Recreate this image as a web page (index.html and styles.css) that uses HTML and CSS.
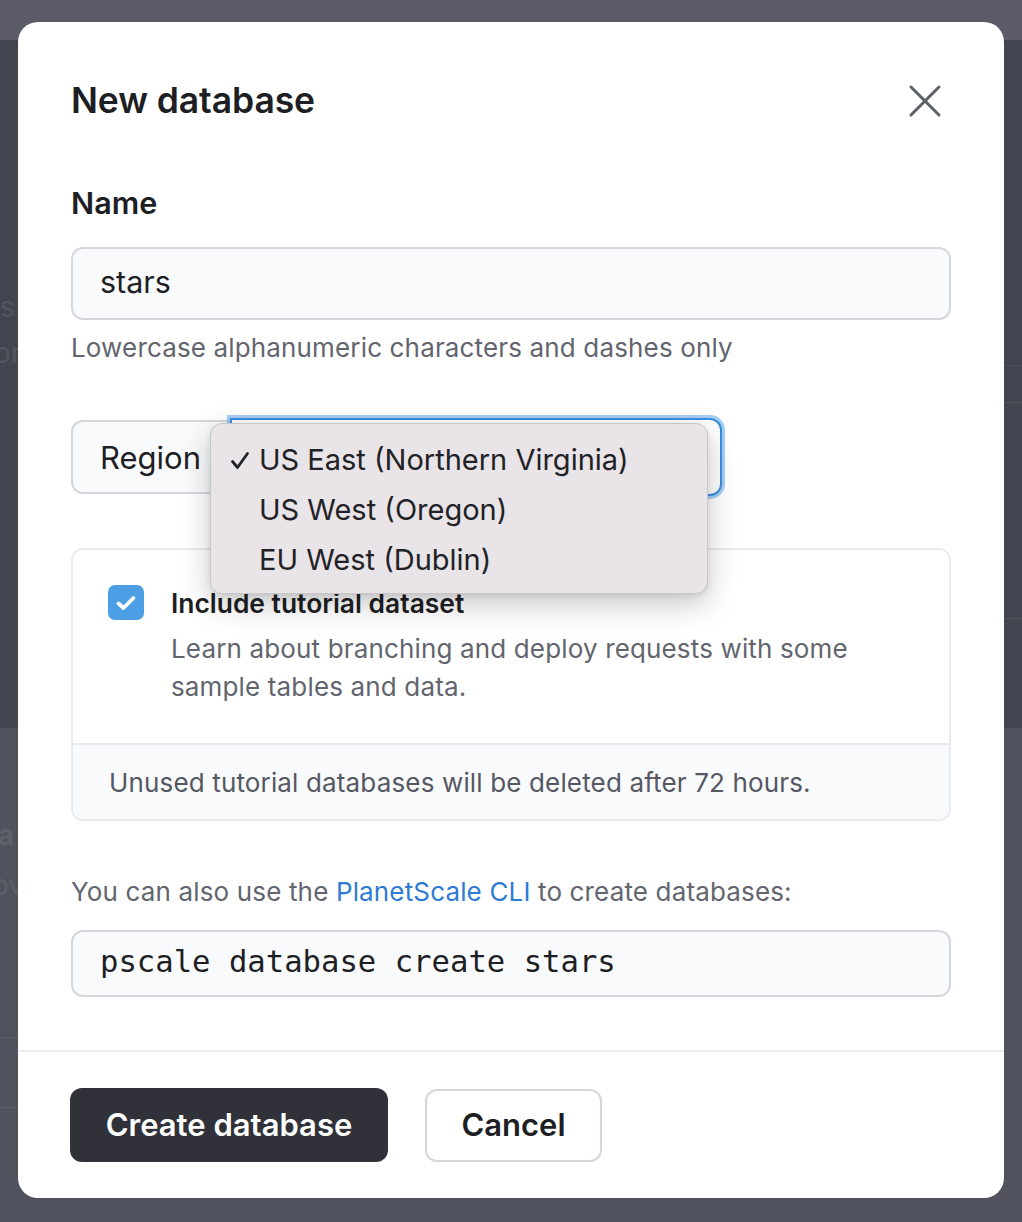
FILE: index.html
```html
<!DOCTYPE html>
<html>
<head>
<meta charset="utf-8">
<link rel="stylesheet" href="styles.css">
</head>
<body>
<div class="page">
  <div class="page-top"></div>
  <div class="page-main">
    <div class="bg-text bg-t1">s</div>
    <div class="bg-text bg-t2">or</div>
    <div class="bg-line bg-l1"></div>
    <div class="bg-line bg-l2"></div>
    <div class="bg-line bg-l3"></div>
  </div>
  <div class="page-bottom">
    <div class="bg-text bg-t3">a</div>
    <div class="bg-text bg-t4">ov</div>
    <div class="bg-line bg-l4"></div>
    <div class="bg-line bg-l5"></div>
  </div>
</div>

<div class="modal">
  <div class="modal-body">
    <div class="modal-header">
      <h2 class="title">New database</h2>
      <svg class="close" width="34" height="34" viewBox="0 0 34 34"><path d="M3 3 L31 31 M31 3 L3 31" stroke="#5d6068" stroke-width="3" stroke-linecap="round" fill="none"/></svg>
    </div>

    <label class="label">Name</label>
    <div class="input">stars</div>
    <p class="help">Lowercase alphanumeric characters and dashes only</p>

    <div class="region-group">
      <div class="region-label">Region</div>
      <div class="region-select"></div>
    </div>

    <div class="card">
      <div class="card-main">
        <div class="checkbox">
          <svg width="24" height="24" viewBox="0 0 24 24"><path d="M4.5 12.5 L9.5 17 L19.5 7" stroke="#fff" stroke-width="3.8" stroke-linecap="round" stroke-linejoin="round" fill="none"/></svg>
        </div>
        <div class="card-text">
          <div class="card-title">Include tutorial dataset</div>
          <div class="card-desc">Learn about branching and deploy requests with some sample tables and data.</div>
        </div>
      </div>
      <div class="card-foot">Unused tutorial databases will be deleted after 72 hours.</div>
    </div>

    <p class="cli">You can also use the <a class="link">PlanetScale CLI</a> to create databases:</p>
    <div class="code">pscale database create stars</div>
  </div>

  <div class="modal-footer">
    <button class="btn btn-primary">Create database</button>
    <button class="btn btn-secondary">Cancel</button>
  </div>

  <div class="popup">
    <div class="popup-item"><span class="tick"><svg width="20" height="20" viewBox="0 0 20 20"><path d="M2.5 10.5 L7.5 16.5 L17.5 2.5" stroke="#222226" stroke-width="2.8" stroke-linecap="round" stroke-linejoin="round" fill="none"/></svg></span>US East (Northern Virginia)</div>
    <div class="popup-item"><span class="tick"></span>US West (Oregon)</div>
    <div class="popup-item"><span class="tick"></span>EU West (Dublin)</div>
  </div>
</div>
</body>
</html>
```

FILE: styles.css
```css
* { box-sizing: border-box; }
html, body { margin: 0; padding: 0; }
body {
  width: 1022px;
  height: 1222px;
  overflow: hidden;
  position: relative;
  font-family: Inter, "Noto Sans", sans-serif;
  color: #1e1f24;
}

.page { display: flex; flex-direction: column; height: 1222px; }
.page-top { height: 40px; background: #5b5c68; }
.page-main { height: 688px; background: #42444f; position: relative; }
.page-bottom { flex: 1; background: #50525d; position: relative; }
.bg-text { position: absolute; color: #54565f; font-size: 28px; font-weight: 400; }
.bg-t1 { left: 0; top: 250px; }
.bg-t2 { left: -6px; top: 296px; }
.bg-t3 { left: -2px; top: 90px; font-weight: 700; color: #5f616a; }
.bg-t4 { left: -8px; top: 140px; color: #5c5e67; }
.bg-line { position: absolute; height: 1px; background: #4d5055; }
.bg-l1 { left: 1004px; right: 0; top: 325px; }
.bg-l2 { left: 1004px; right: 0; top: 362px; background: #4f5754; }
.bg-l3 { left: 1004px; right: 0; top: 578px; background: #4f5754; }
.bg-l4 { left: 0; width: 18px; top: 309px; background: #5a5c66; }
.bg-l5 { left: 0; width: 18px; top: 379px; background: #5a5c66; }

.modal {
  position: absolute;
  left: 18px;
  top: 22px;
  width: 986px;
  height: 1176px;
  background: #fff;
  border-radius: 20px;
  display: flex;
  flex-direction: column;
}
.modal-body {
  padding: 56px 53px 0 53px;
  flex: 1;
}
.modal-header {
  display: flex;
  align-items: center;
  justify-content: space-between;
  height: 46px;
}
.title {
  margin: 0;
  font-size: 35.5px;
  font-weight: 600;
  line-height: 46px;
  letter-spacing: -0.1px;
}
.close { margin-right: 9px; }

.label {
  display: block;
  margin-top: 61px;
  font-size: 30.5px;
  font-weight: 600;
  line-height: 36px;
}
.input {
  margin-top: 26px;
  height: 73px;
  border: 2px solid #d6d7dc;
  border-radius: 12px;
  background: #f9fafb;
  padding: 0 27px 4px;
  display: flex;
  align-items: center;
  font-size: 30.5px;
  color: #1e1f24;
}
.help {
  margin: 10px 0 0;
  font-size: 26px;
  line-height: 36px;
  color: #62656e;
  letter-spacing: 0.15px;
}

.region-group {
  margin-top: 54px;
  display: flex;
  height: 74px;
  width: 651px;
}
.region-label {
  width: 159px;
  border: 2px solid #d6d7dc;
  border-right: none;
  border-radius: 12px 0 0 12px;
  background: #f9fafb;
  display: flex;
  align-items: center;
  padding-left: 27px;
  font-size: 31px;
}
.region-select {
  flex: 1;
  margin: -2px 0 -2px 0;
  border: 2px solid #3a8fe0;
  border-radius: 0 12px 12px 0;
  box-shadow: 0 0 0 3px rgba(92, 168, 236, 0.55);
  background: #fff;
}

.card {
  margin-top: 54px;
  border: 2px solid #ebebef;
  border-radius: 12px;
  overflow: hidden;
}
.card-main {
  display: flex;
  padding: 35px 36px 37px 35px;
  gap: 27px;
}
.checkbox {
  width: 36px;
  height: 35px;
  border-radius: 7px;
  background: #4c9fe4;
  display: flex;
  align-items: center;
  justify-content: center;
  flex: none;
}
.card-text { flex: 1; }
.card-title {
  font-size: 26.4px;
  font-weight: 600;
  line-height: 36px;
  margin-top: 0;
}
.card-desc {
  margin-top: 9px;
  font-size: 26px;
  line-height: 38px;
  color: #62656e;
  letter-spacing: 0.15px;
  width: 720px;
}
.card-foot {
  border-top: 2px solid #ebebef;
  background: #f9fafb;
  height: 76px;
  display: flex;
  align-items: center;
  padding-left: 36px;
  font-size: 26px;
  color: #555862;
  letter-spacing: 0.15px;
}

.cli {
  margin: 53px 0 0;
  font-size: 26px;
  line-height: 36px;
  color: #62656e;
  letter-spacing: 0.15px;
}
.link { color: #2d7bd4; }
.code {
  margin-top: 20px;
  height: 67px;
  border: 2px solid #d6d7dc;
  border-radius: 12px;
  background: #f9fafb;
  display: flex;
  align-items: center;
  padding: 0 0 4px 27px;
  font-family: "DejaVu Sans Mono", monospace;
  font-size: 30.6px;
  color: #1e1f24;
}

.modal-footer {
  border-top: 2px solid #ededf1;
  height: 148px;
  padding: 36px 52px 0 52px;
  display: flex;
  gap: 37px;
  align-items: flex-start;
}
.btn {
  height: 74px;
  border-radius: 12px;
  font-family: Inter, sans-serif;
  font-size: 31px;
  font-weight: 600;
  padding: 0 0 2px;
}
.btn-primary {
  background: #303139;
  color: #fff;
  border: none;
  width: 318px;
}
.btn-secondary {
  background: #fff;
  color: #1e1f24;
  border: 2px solid #d6d7dc;
  width: 177px;
  height: 73px;
  margin-top: 1px;
}

.popup {
  position: absolute;
  left: 192px;
  top: 401px;
  width: 498px;
  height: 171px;
  background: #e8e4e7;
  border: 1px solid #c9c6ca;
  border-radius: 12px;
  box-shadow: 0 10px 30px rgba(0, 0, 0, 0.22), 0 2px 6px rgba(0, 0, 0, 0.08);
  padding-top: 10px;
}
.popup-item {
  height: 50px;
  display: flex;
  align-items: center;
  font-size: 29px;
  color: #222226;
  padding-left: 19px;
}
.tick {
  display: inline-flex;
  align-items: center;
  width: 29px;
  height: 24px;
  margin-top: 4px;
}
```
